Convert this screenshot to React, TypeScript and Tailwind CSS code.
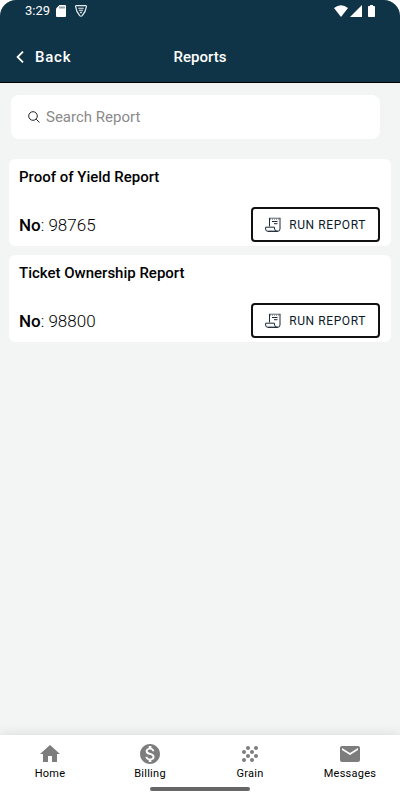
import { MdEmail, MdGrain, MdHome, MdMonetizationOn } from "react-icons/md";
import type { IconType } from "react-icons";

const reports = [
  { no: "98765", title: "Proof of Yield Report" },
  { no: "98800", title: "Ticket Ownership Report" },
];

const navItems: { id: string; icon: IconType; label: string }[] = [
  { id: "home", icon: MdHome, label: "Home" },
  { id: "billing", icon: MdMonetizationOn, label: "Billing" },
  { id: "grain", icon: MdGrain, label: "Grain" },
  { id: "messages", icon: MdEmail, label: "Messages" },
];

function ReportIcon() {
  return (
    <svg viewBox="0 0 16 15" className="w-4 h-[15px]" fill="none" stroke="#1c2a3a" strokeWidth="1" aria-hidden="true">
      <path d="M4.500 9.500V1.200M15 1.200V12a2.300 2.300 0 0 1-2.300 2.300H3" />
      <path d="M4 1.200h11.500" strokeOpacity=".7" />
      <path d="M5 2.200h10" strokeDasharray="1 1" strokeOpacity=".6" />
      <path d="M.6 10.200h8.800q-.1 4.100 3.300 4.100H3A2.300 2.300 0 0 1 .6 12z" />
      <path d="M7 4.500h5.500M9 6.700h3.500" />
    </svg>
  );
}

function StatusBar() {
  return (
    <div className="flex items-center justify-between h-[22px] px-[25px]">
      <div className="flex items-center">
        <span className="text-[13px] leading-[22px]">3:29</span>
        {/* SD card */}
        <svg viewBox="0 0 10 12" className="ml-[6px] w-[10px] h-3" aria-hidden="true">
          <path d="M3.500 0H9a1 1 0 0 1 1 1v10a1 1 0 0 1-1 1H1a1 1 0 0 1-1-1V3.500z" fill="#fff" />
          <path d="M4 1.500v2M6 1.500v2M8 1.500v2" stroke="#0f3447" strokeWidth=".9" />
        </svg>
        {/* Shield */}
        <svg viewBox="0 0 12 12" className="ml-[9px] w-3 h-3" fill="none" stroke="#e6edf0" aria-hidden="true">
          <path d="M1.300.7h9.400q.9 0 .7.900Q10.800 6.500 7.300 10.600q-1.300 1.300-2.600 0Q1.200 6.500.6 1.600.4.7 1.300.7z" strokeWidth="1.200" />
          <path d="M3.300 3.200h5.400M3.900 5.300h4.200" strokeWidth="1.100" />
          <path d="M4.500 6.700h3L6 8.700z" fill="#e6edf0" stroke="none" />
        </svg>
      </div>
      <div className="flex items-center">
        <svg viewBox="0 0 14 12" className="w-[14px] h-3" fill="#fff" aria-hidden="true">
          <path d="M0 3q7-5.600 14 0L7 12z" />
        </svg>
        <svg viewBox="0 0 12 12" className="ml-[2px] w-3 h-3" fill="#fff" aria-hidden="true">
          <path d="M12 0v12H0z" />
        </svg>
        <svg viewBox="0 0 7 12" className="ml-[6px] w-[7px] h-3" fill="#fff" aria-hidden="true">
          <path d="M2 0h3v1h1.200q.8 0 .8.800v9.400q0 .8-.8.8H.8q-.8 0-.8-.8V1.800Q0 1 .8 1H2z" />
        </svg>
      </div>
    </div>
  );
}

function Header() {
  return (
    <header className="bg-[#0f3447] text-white rounded-t-2xl border-b border-black">
      <StatusBar />
      <div className="grid grid-cols-3 items-center h-[60px] pt-[10px] px-4">
        <button type="button" className="flex items-center gap-[11px] text-[15px] font-medium tracking-wider">
          <svg viewBox="0 0 8 12" className="w-2 h-3" fill="none" stroke="#fff" strokeWidth="1.800" aria-hidden="true">
            <path d="M7 .6 1.600 6 7 11.400" />
          </svg>
          Back
        </button>
        <h1 className="text-center text-[15px] font-medium">Reports</h1>
      </div>
    </header>
  );
}

function ReportCard({ no, title }: { no: string; title: string }) {
  return (
    <li className="bg-white rounded-md pl-[10px] pr-[11px] pt-2 pb-1">
      <h2 className="text-[15px] leading-5 font-medium">{title}</h2>
      <div className="flex items-center justify-between mt-5">
        <p className="text-[17px] leading-6 font-light">
          <span className="font-medium">No</span>: {no}
        </p>
        <button
          type="button"
          className="flex items-center gap-2 h-[35px] px-3 border-2 border-[#111] rounded text-xs text-[#0d1b2a] tracking-wider"
        >
          <ReportIcon />
          RUN REPORT
        </button>
      </div>
    </li>
  );
}

export default function App() {
  return (
    <div className="min-h-screen flex flex-col bg-white text-black font-['Roboto',sans-serif]">
      <Header />

      <main className="flex-1 bg-[#f3f5f5] pt-3 pb-4">
        <label className="flex items-center gap-[6px] h-11 ml-[11px] mr-5 pl-[17px] pr-4 bg-white rounded-lg">
          <svg viewBox="0 0 12 12" className="w-3 h-3 shrink-0" fill="none" stroke="#222" strokeWidth="1" aria-hidden="true">
            <circle cx="5" cy="5" r="4.300" />
            <path d="m8.200 8.200 3.300 3.300" />
          </svg>
          <input
            type="text"
            aria-label="Search Report"
            placeholder="Search Report"
            className="flex-1 min-w-0 bg-transparent outline-none text-[15px] placeholder:text-[#8a8a8a]"
          />
        </label>

        <ul className="flex flex-col gap-[9px] mt-5 mx-[9px]">
          {reports.map((report) => (
            <ReportCard key={report.no} no={report.no} title={report.title} />
          ))}
        </ul>
      </main>

      <footer className="relative bg-white shadow-[0_0_12px_rgba(0,0,0,0.12)]">
        <nav className="grid grid-cols-4 h-[52px] pt-[7px]">
          {navItems.map((item) => {
            const Icon = item.icon;
            return (
              <a key={item.id} href={`#${item.id}`} className="flex flex-col items-center text-[11px] leading-4 tracking-wide">
                <Icon className="size-6 text-[#7d7d7d]" />
                {item.label}
              </a>
            );
          })}
        </nav>
        <div className="mx-auto w-1/4 h-1 mb-[9px] rounded-full bg-[#666]" />
      </footer>
    </div>
  );
}
